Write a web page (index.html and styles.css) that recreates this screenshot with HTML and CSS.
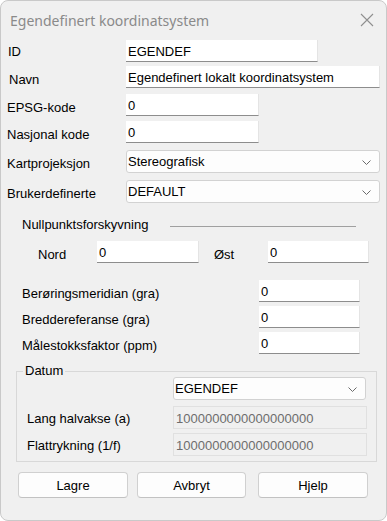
FILE: index.html
```html
<!DOCTYPE html>
<html lang="no">
<head>
<meta charset="utf-8">
<title>Egendefinert koordinatsystem</title>
<link rel="stylesheet" href="styles.css">
</head>
<body>
<div class="window">
  <div class="titlebar">
    <span class="title">Egendefinert koordinatsystem</span>
    <svg class="close" width="14" height="14" viewBox="0 0 14 14"><path d="M1 1 L13 13 M13 1 L1 13" stroke="#8f8f8f" stroke-width="1.1" fill="none"/></svg>
  </div>
  <div class="form">
    <div class="row r-id"><span class="lbl l-id">ID</span><input class="txt w192" value="EGENDEF"></div>
    <div class="row r-navn"><span class="lbl l-navn">Navn</span><input class="txt w254" value="Egendefinert lokalt koordinatsystem"></div>
    <div class="row r-epsg"><span class="lbl l-low">EPSG-kode</span><input class="txt w133" value="0"></div>
    <div class="row r-nasj"><span class="lbl l-low">Nasjonal kode</span><input class="txt w133" value="0"></div>
    <div class="row r-kart"><span class="lbl l-low">Kartprojeksjon</span><div class="select w254"><span>Stereografisk</span><svg class="chev" width="9" height="5" viewBox="0 0 9 5"><path d="M0.5 0.5 L4.5 4.5 L8.5 0.5" stroke="#6b6b6b" fill="none"/></svg></div></div>
    <div class="row r-bruk"><span class="lbl l-low">Brukerdefinerte</span><div class="select w254"><span>DEFAULT</span><svg class="chev" width="9" height="5" viewBox="0 0 9 5"><path d="M0.5 0.5 L4.5 4.5 L8.5 0.5" stroke="#6b6b6b" fill="none"/></svg></div></div>

    <div class="section-head"><span class="sec-text">Nullpunktsforskyvning</span><div class="rule"></div></div>
    <div class="row r-nord">
      <span class="lbl-nord">Nord</span><input class="txt w102" value="0">
      <span class="lbl-ost">Øst</span><input class="txt w101" value="0">
    </div>

    <div class="row r-ber"><span class="lbl2">Berøringsmeridian (gra)</span><input class="txt w101" value="0"></div>
    <div class="row r-bre"><span class="lbl2">Breddereferanse (gra)</span><input class="txt w101" value="0"></div>
    <div class="row r-bre"><span class="lbl2">Målestokksfaktor (ppm)</span><input class="txt w101" value="0"></div>

    <div class="group">
      <div class="group-title">Datum</div>
      <div class="grow g-sel"><div class="select w193"><span>EGENDEF</span><svg class="chev" width="9" height="5" viewBox="0 0 9 5"><path d="M0.5 0.5 L4.5 4.5 L8.5 0.5" stroke="#6b6b6b" fill="none"/></svg></div></div>
      <div class="grow g-a"><span class="lbl3">Lang halvakse (a)</span><input class="txt dis w194" value="1000000000000000000" disabled></div>
      <div class="grow g-f"><span class="lbl3">Flattrykning (1/f)</span><input class="txt dis w194" value="1000000000000000000" disabled></div>
    </div>

    <div class="buttons">
      <button class="btn b1">Lagre</button>
      <button class="btn b2">Avbryt</button>
      <button class="btn b3">Hjelp</button>
    </div>
  </div>
</div>
</body>
</html>
```

FILE: styles.css
```css
html, body {
  margin: 0;
  padding: 0;
  background: #ffffff;
}
.window {
  width: 387px;
  height: 521px;
  box-sizing: border-box;
  border: 1px solid #c9c9c9;
  border-radius: 8px;
  background: #f0f0f0;
  font-family: "Liberation Sans", Arial, sans-serif;
  font-size: 13px;
  color: #000;
  overflow: hidden;
}
.titlebar {
  height: 39px;
  display: flex;
  align-items: center;
  justify-content: space-between;
  padding: 0 12px 0 9px;
}
.title {
  font-family: "Noto Sans", "Open Sans", sans-serif;
  font-size: 14px;
  color: #8a8a8a;
  margin-top: -1px;
}
.close {
  margin-top: -2px;
}
.row {
  display: flex;
  height: 22px;
}
.lbl {
  width: 125px;
  box-sizing: border-box;
  padding-left: 6px;
  padding-top: 5px;
  line-height: 15px;
}
.l-id { padding-left: 7px; padding-top: 4px; }
.l-navn { padding-left: 8px; padding-top: 6px; }
.l-low { padding-top: 6px; }
.r-navn { margin-top: 4px; }
.r-epsg { margin-top: 6px; }
.r-nasj { margin-top: 5px; }
.r-kart { margin-top: 7px; height: 23px; }
.r-bruk { margin-top: 7px; height: 23px; }

.txt {
  height: 22px;
  box-sizing: border-box;
  margin: 0;
  border: none;
  border-bottom: 1px solid #8d8d8d;
  border-right: 1px solid #e4e4e4;
  background: #ffffff;
  padding: 2px 2px 0 2px;
  font-family: "Liberation Sans", Arial, sans-serif;
  font-size: 13px;
  color: #000;
  outline: none;
}
.w192 { width: 192px; }
.w254 { width: 254px; }
.w133 { width: 133px; }
.w102 { width: 102px; }
.w101 { width: 101px; }
.w193 { width: 193px; }
.w194 { width: 194px; }

.select {
  height: 23px;
  box-sizing: border-box;
  border: 1px solid #d2d2d2;
  border-radius: 3px;
  background: #fdfdfd;
  display: flex;
  align-items: center;
  justify-content: space-between;
  padding: 0 8px 0 1px;
}
.select span { margin-top: -1px; }
.chev { margin-top: 1px; }

.section-head {
  display: flex;
  align-items: center;
  margin-top: 14px;
  padding-left: 21px;
  height: 15px;
  line-height: 15px;
}
.sec-text {
  width: 148px;
  flex: none;
}
.rule {
  width: 186px;
  height: 1px;
  background: #a0a0a0;
  margin-top: 3px;
}
.r-nord { margin-top: 9px; }
.lbl-nord {
  width: 96px;
  box-sizing: border-box;
  padding-left: 37px;
  padding-top: 6px;
  line-height: 15px;
}
.lbl-ost {
  width: 69px;
  box-sizing: border-box;
  padding-left: 15px;
  padding-top: 6px;
  line-height: 15px;
}
.lbl2 {
  width: 258px;
  box-sizing: border-box;
  padding-left: 21px;
  padding-top: 6px;
  line-height: 15px;
}
.r-ber { margin-top: 17px; }
.r-bre { margin-top: 4px; }

.group {
  margin: 17px 9px 0 15px;
  height: 91px;
  box-sizing: border-box;
  border: 1px solid #d8d8d8;
}
.group-title {
  width: fit-content;
  margin: -9px 0 0 6px;
  padding: 0 2px;
  background: #f0f0f0;
  line-height: 16px;
  height: 16px;
}
.grow {
  display: flex;
  height: 23px;
}
.g-sel { margin-top: -2px; padding-left: 156px; }
.g-a { margin-top: 6px; }
.g-f { margin-top: 4px; }
.lbl3 {
  width: 156px;
  box-sizing: border-box;
  padding-left: 10px;
  padding-top: 5px;
  line-height: 15px;
}
.txt.dis {
  height: 23px;
  background: #f0f0f0;
  border: 1px solid #e0e0e0;
  color: #6d6d6d;
  padding-top: 1px;
}

.buttons {
  display: flex;
  margin-top: 10px;
  padding-left: 17px;
}
.btn {
  height: 26px;
  box-sizing: border-box;
  border: 1px solid #d0d0d0;
  border-bottom-color: #c2c2c2;
  border-radius: 4px;
  background: #fdfdfd;
  font-family: "Liberation Sans", Arial, sans-serif;
  font-size: 13px;
  color: #000;
  padding: 0;
}
.b1 { width: 110px; }
.b2 { width: 109px; margin-left: 9px; }
.b3 { width: 110px; margin-left: 12px; }
```
